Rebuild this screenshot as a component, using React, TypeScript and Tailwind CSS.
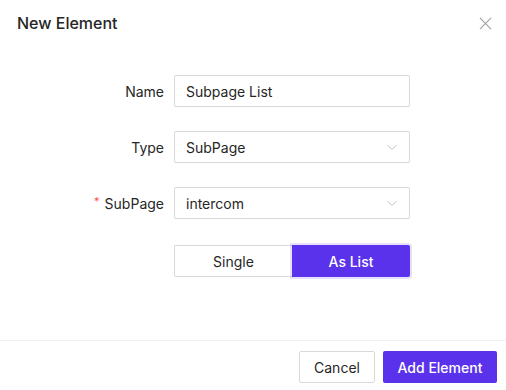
import React from "react";

const font = { fontFamily: "Inter, 'Noto Sans', sans-serif" };

function Chevron() {
  return (
    <svg width="12" height="12" viewBox="0 0 12 12" fill="none" className="text-[#bfbfbf]">
      <path d="M1.5 4L6 8.5L10.5 4" stroke="currentColor" strokeWidth="1" />
    </svg>
  );
}

function Row({ label, required, children }: { label: string; required?: boolean; children: React.ReactNode }) {
  return (
    <div className="flex items-center">
      <div className="w-[164px] flex justify-end items-center text-[14px] text-[#262626]">
        {required && <span className="text-[#ff4d4f] mr-[5px] text-[11px] leading-none -mt-[3px]">*</span>}
        {label}
      </div>
      <div className="ml-[10px] w-[236px]">{children}</div>
    </div>
  );
}

export default function App() {
  return (
    <div className="w-[506px] h-[390px] bg-white flex flex-col" style={font}>
      <div className="h-[46px] flex items-center justify-between pl-[17px] pr-[14px]">
        <span className="text-[16px] font-medium text-[#262626]">New Element</span>
        <svg width="13" height="13" viewBox="0 0 14 14" className="text-[#a0a0a0]">
          <path d="M1 1L13 13M13 1L1 13" stroke="currentColor" strokeWidth="1.2" />
        </svg>
      </div>
      <div className="flex-1 flex flex-col gap-[24px] pt-[29px]">
        <Row label="Name">
          <div className="h-[32px] border border-[#d9d9d9] rounded-[2px] flex items-center px-[11px] text-[14px] text-[#262626]">
            Subpage List
          </div>
        </Row>
        <Row label="Type">
          <div className="h-[32px] border border-[#d9d9d9] rounded-[2px] flex items-center justify-between pl-[11px] pr-[11px] text-[14px] text-[#262626]">
            SubPage
            <Chevron />
          </div>
        </Row>
        <Row label="SubPage" required>
          <div className="h-[32px] border border-[#d9d9d9] rounded-[2px] flex items-center justify-between pl-[11px] pr-[11px] text-[14px] text-[#262626]">
            intercom
            <Chevron />
          </div>
        </Row>
        <div className="flex pl-[174px] mt-[2px]">
          <div className="w-[118px] h-[32px] border border-[#d9d9d9] border-r-0 rounded-l-[2px] flex items-center justify-center text-[14px] text-[#262626]">
            Single
          </div>
          <div className="w-[118px] h-[32px] bg-[#5b32ec] rounded-r-[2px] flex items-center justify-center text-[14px] font-medium text-white shadow-[0_0_0_2px_rgba(91,50,236,0.15)]">
            As List
          </div>
        </div>
      </div>
      <div className="h-[50px] border-t border-[#f0f0f0] flex justify-end items-start pt-[10px] pr-[9px] gap-[8px]">
        <div className="w-[76px] h-[32px] border border-[#d9d9d9] rounded-[2px] flex items-center justify-center text-[14px] text-[#262626]">
          Cancel
        </div>
        <div className="w-[114px] h-[32px] bg-[#5b32ec] rounded-[2px] flex items-center justify-center text-[14px] font-medium text-white">
          Add Element
        </div>
      </div>
    </div>
  );
}
